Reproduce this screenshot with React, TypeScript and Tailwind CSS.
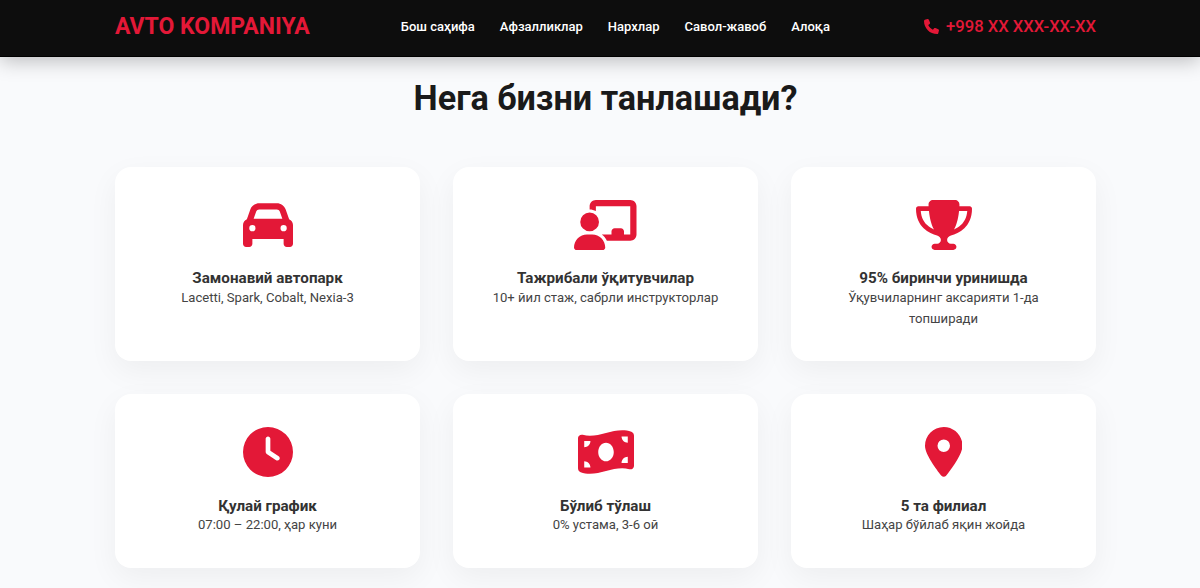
import { FaCar, FaChalkboardUser, FaTrophy, FaClock, FaMoneyBillWave, FaLocationDot, FaPhone } from "react-icons/fa6"

const links = ["Бош саҳифа", "Афзалликлар", "Нархлар", "Савол-жавоб", "Алоқа"]

const features = [
  { icon: FaCar, width: "w-[50px]", title: "Замонавий автопарк", text: "Lacetti, Spark, Cobalt, Nexia-3" },
  { icon: FaChalkboardUser, width: "w-[62.5px]", title: "Тажрибали ўқитувчилар", text: "10+ йил стаж, сабрли инструкторлар" },
  { icon: FaTrophy, width: "w-[56px]", title: "95% биринчи уринишда", text: "Ўқувчиларнинг аксарияти 1-да топширади" },
  { icon: FaClock, width: "w-[50px]", title: "Қулай график", text: "07:00 – 22:00, ҳар куни" },
  { icon: FaMoneyBillWave, width: "w-[56px]", title: "Бўлиб тўлаш", text: "0% устама, 3-6 ой" },
  { icon: FaLocationDot, width: "w-[37.5px]", title: "5 та филиал", text: "Шаҳар бўйлаб яқин жойда" },
]

export default function App() {
  return (
    <div className="h-[588px] overflow-hidden bg-[#f9fafc] font-['Roboto',sans-serif]">
      {/* Navbar */}
      <nav className="relative h-[57px] bg-[#0d0d0d] border-b border-black pb-[2px] shadow-[0_4px_20px_rgba(0,0,0,0.25)]">
        <div className="ml-[115px] w-[981px] h-full flex items-center justify-between">
          <div className="text-[23px] font-bold text-[#e31837]">AVTO KOMPANIYA</div>
          <ul className="flex gap-[25px] mr-[3px]">
            {links.map((link) => (
              <li key={link} className="text-[13px] font-medium text-white">{link}</li>
            ))}
          </ul>
          <div className="flex items-center gap-[7px] text-[16.6px] font-medium text-[#e31837]">
            <FaPhone className="text-[15px]" />
            +998 XX XXX-XX-XX
          </div>
        </div>
      </nav>

      <section className="ml-[115px] w-[981px]">
        <h2 className="mt-[16px] mb-[43.6px] text-center text-[34.2px] leading-[50px] font-bold text-[#1a1a1a]">Нега бизни танлашади?</h2>

        <div className="grid grid-cols-3 gap-[33px]">
          {features.map((item) => (
            <div key={item.title} className="bg-white rounded-2xl pl-8 pr-8 pt-[33px] pb-[32.6px] text-center shadow-[0_10px_30px_rgba(0,0,0,0.05)]">
              <item.icon className={`${item.width} h-[50px] text-[#e31837] mx-auto mb-[19.5px]`} />
              <h3 className="text-[15.2px] leading-[18px] mb-[-0.5px] font-bold text-[#333]">{item.title}</h3>
              <p className="text-[13.1px] leading-[21px] text-[#444]">{item.text}</p>
            </div>
          ))}
        </div>
      </section>
    </div>
  )
}
